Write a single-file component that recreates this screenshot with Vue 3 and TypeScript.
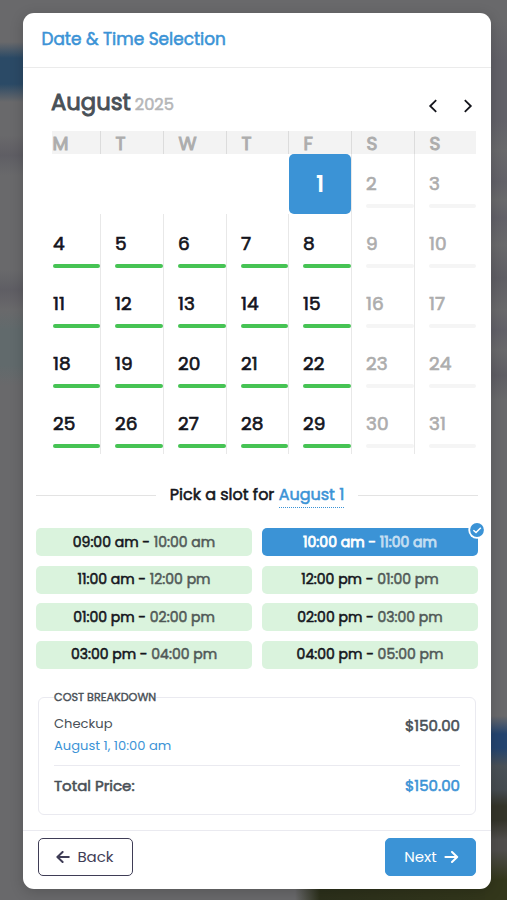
<script setup lang="ts">
interface Slot {
  from: string
  to: string
}

const weekdays: string[] = ['M', 'T', 'W', 'T', 'F', 'S', 'S']
const blanks = 4
const selectedDay = 1
const days = Array.from({ length: 31 }, (_, i) => {
  const day = i + 1
  const column = (i + blanks) % 7
  return { day, open: column < 5, selected: day === selectedDay, first: column === 0 }
})

const slots: Slot[] = [
  { from: '09:00 am', to: '10:00 am' },
  { from: '10:00 am', to: '11:00 am' },
  { from: '11:00 am', to: '12:00 pm' },
  { from: '12:00 pm', to: '01:00 pm' },
  { from: '01:00 pm', to: '02:00 pm' },
  { from: '02:00 pm', to: '03:00 pm' },
  { from: '03:00 pm', to: '04:00 pm' },
  { from: '04:00 pm', to: '05:00 pm' },
]
const selectedSlot = '10:00 am'
</script>

<template>
  <div class="page">
    <section class="modal">
      <header class="head heavy">Date &amp; Time Selection</header>

      <main class="body">
        <div class="month-bar">
          <h2 class="month">August</h2>
          <span class="year heavy">2025</span>
          <span class="nav">
            <svg width="10" height="14" viewBox="0 0 10 14"><path d="M8.2 1.2 2.2 7l6 5.8" /></svg>
            <svg width="10" height="14" viewBox="0 0 10 14"><path d="M1.8 1.2 7.8 7l-6 5.8" /></svg>
          </span>
        </div>

        <div class="week">
          <span v-for="(name, i) in weekdays" :key="i" class="weekday">{{ name }}</span>
        </div>
        <div class="days">
          <span v-for="n in blanks" :key="'b' + n" class="blank"></span>
          <div
            v-for="d in days"
            :key="d.day"
            class="day"
            :class="{ open: d.open, selected: d.selected, first: d.first }"
          >
            <span class="num">{{ d.day }}</span>
            <span v-if="!d.selected" class="bar"></span>
          </div>
        </div>

        <div class="pick heavy">
          <span class="pick-text">Pick a slot for <span class="pick-date">August 1</span></span>
        </div>

        <div class="slots">
          <div v-for="s in slots" :key="s.from" class="slot heavy" :class="{ active: s.from === selectedSlot }">
            <span class="time">{{ s.from }} - <span class="to">{{ s.to }}</span></span>
            <svg v-if="s.from === selectedSlot" class="badge" width="18" height="18" viewBox="0 0 18 18">
              <circle cx="9" cy="9" r="8.7" fill="#fff" />
              <circle cx="9" cy="9" r="6.9" fill="#3b93d6" />
              <path d="M5.4 9.2 8 11.5l4.8-4.8" fill="none" stroke="#fff" stroke-width="1.5" />
            </svg>
          </div>
        </div>

        <div class="cost">
          <span class="legend">COST BREAKDOWN</span>
          <div class="line">
            <div>
              <div class="item">Checkup</div>
              <div class="when">August 1, 10:00 am</div>
            </div>
            <span class="price heavy">$150.00</span>
          </div>
          <div class="total heavy">
            <span>Total Price:</span>
            <span class="price blue">$150.00</span>
          </div>
        </div>
      </main>

      <footer class="foot">
        <button class="btn back">
          <svg width="14" height="12" viewBox="0 0 14 12"><path d="M6.6 1 1.4 6l5.2 5M1.6 6h11.2" /></svg>
          <span>Back</span>
        </button>
        <button class="btn next">
          <span>Next</span>
          <svg width="15" height="12" viewBox="0 0 15 12"><path d="M8 1l5.2 5L8 11M13 6H1.4" /></svg>
        </button>
      </footer>
    </section>
  </div>
</template>

<style>
body {
  margin: 0;
  background: #69696b;
}
</style>

<style scoped>
.page {
  box-sizing: border-box;
  width: 507px;
  height: 900px;
  padding: 13px 16px 11px 23px;
  overflow: hidden;
  font-family: Poppins, Inter, "Open Sans", sans-serif;
  background:
    linear-gradient(180deg, transparent 42px, #2b4a66 58px, #2b4a66 84px, transparent 102px) 0 0 / 30px 900px no-repeat,
    linear-gradient(180deg, transparent 135px, #5f5e64 155px, transparent 175px, transparent 270px, #5f5e64 290px, transparent 310px, #616a6c 330px, #616a6c 365px, transparent 385px) 0 0 / 30px 900px no-repeat,
    linear-gradient(180deg, transparent 20px, #626168 60px, #626168 120px, #69696b 150px, #626168 182px, #69696b 200px, #626168 218px, #69696b 245px, #5f5e64 278px, #69696b 310px, #626168 330px, #69696b 350px, #5f5e64 375px, #69696b 400px, #69696b 716px, #24446f 734px, #24446f 748px, #4a5157 766px, #454b50 790px, #34342a 806px, #34342a 820px, #504e4c 840px, #504e4c 850px, #33371b 880px) 485px 0 / 22px 900px no-repeat,
    linear-gradient(90deg, transparent 295px, #2c301b 320px, #33371b 507px) 0 885px / 507px 15px no-repeat,
    #69696b;
}
.modal {
  box-sizing: border-box;
  display: flex;
  flex-direction: column;
  height: 876px;
  border-radius: 11px;
  background: #fff;
  box-shadow: 0 3px 14px rgba(0, 0, 0, 0.18);
}
/* Regular weight thickened by a thin stroke, keeping the regular widths */
.heavy {
  font-weight: 400;
  -webkit-text-stroke: 0.55px currentColor;
}
.head {
  box-sizing: border-box;
  height: 55px;
  padding: 0 18.5px;
  border-bottom: 1px solid #ebebeb;
  color: #3b93d6;
  font-size: 16.9px;
  line-height: 53px;
}
.body {
  height: 762px;
}
.month-bar {
  display: flex;
  align-items: baseline;
  height: 63px;
  padding: 0 18px 0 28px;
  line-height: 69px;
}
.month {
  margin: 0;
  color: #495057;
  font-size: 22.7px;
  font-weight: 400;
  -webkit-text-stroke: 0.9px currentColor;
}
.year {
  margin-left: 4px;
  color: #b5b6b8;
  font-size: 16.3px;
}
.nav {
  display: flex;
  gap: 25px;
  margin-left: auto;
  transform: translateY(3px);
}
.nav svg {
  fill: none;
  stroke: #14151c;
  stroke-width: 1.8;
}
.week,
.days {
  display: grid;
  grid-template-columns: 62px 63px 63px 62px 63px 63px 62px;
  width: 438px;
  margin-left: 15px;
}
.weekday {
  box-sizing: border-box;
  height: 23px;
  padding-left: 14.5px;
  border-left: 1px solid #dcdcdc;
  background: #f3f3f3;
  color: #adadad;
  font-size: 18.5px;
  font-weight: 400;
  -webkit-text-stroke: 1px currentColor;
  line-height: 25px;
}
.weekday:first-child {
  margin-left: 14px;
  padding-left: 0.5px;
  border-left: 0;
}
.day {
  box-sizing: border-box;
  display: flex;
  flex-direction: column;
  height: 60px;
  padding: 16px 0 0 14px;
  border-left: 1px solid #e8e8e8;
  color: #adadad;
  font-size: 18.5px;
  font-weight: 400;
  -webkit-text-stroke: 0.65px currentColor;
}
.day.first {
  border-left-color: transparent;
}
.num {
  height: 34px;
  line-height: 28px;
}
.bar {
  height: 4px;
  border-radius: 2px;
  background: #f5f5f5;
}
.open {
  color: #14151c;
}
.open .bar {
  background: #46c354;
}
.day.selected {
  align-items: center;
  justify-content: center;
  margin-left: 1px;
  padding: 0 0 1px;
  border: 0;
  border-radius: 5px;
  background: #3b93d6;
  color: #fff;
  font-size: 22.5px;
  font-weight: 600;
  -webkit-text-stroke: 0;
}
.selected .num {
  height: auto;
}
.pick {
  display: flex;
  align-items: center;
  gap: 14px;
  height: 26px;
  margin: 28px 13px 0;
  color: #14151c;
  font-size: 16px;
  line-height: 24px;
  white-space: nowrap;
}
.pick::before,
.pick::after {
  content: "";
  flex: 1;
  height: 1px;
  background: #e3e3e3;
}
.pick-date {
  padding-bottom: 1px;
  border-bottom: 1px dotted #3b93d6;
  color: #3b93d6;
}
.slots {
  display: grid;
  grid-template-columns: 216px 216px;
  gap: 9.6px 10px;
  margin: 20px 13px 0;
}
.slot {
  position: relative;
  height: 28px;
  border-radius: 5px;
  background: #daf3dd;
  color: #14151c;
  font-size: 14px;
  line-height: 28px;
  text-align: center;
}
.time {
  position: relative;
  top: -0.4px;
}
.to {
  opacity: 0.7;
}
.slot.active {
  background: #3b93d6;
  color: #fff;
  -webkit-text-stroke: 0.8px currentColor;
}
.badge {
  position: absolute;
  top: -7px;
  right: -7.5px;
}
.cost {
  position: relative;
  box-sizing: border-box;
  height: 118px;
  margin: 28px 15px 0;
  padding: 14px 15px;
  border: 1px solid #eaeaf0;
  border-radius: 6px;
  color: #495057;
}
.legend {
  position: absolute;
  top: -10px;
  left: 15px;
  background: #fff;
  font-size: 11.2px;
  font-weight: 400;
  -webkit-text-stroke: 0.4px currentColor;
  line-height: 18px;
}
.line {
  display: flex;
  justify-content: space-between;
  height: 53px;
  border-bottom: 1px solid #eaeaf0;
}
.item,
.when {
  position: relative;
  top: 1px;
  font-size: 13.1px;
  line-height: 22px;
}
.when,
.blue {
  color: #3b93d6;
}
.price {
  font-size: 15px;
  line-height: 27px;
}
.total {
  display: flex;
  justify-content: space-between;
  padding-top: 6px;
  font-size: 15px;
  line-height: 27px;
}
.foot {
  box-sizing: border-box;
  display: flex;
  justify-content: space-between;
  height: 59px;
  padding: 7px 15px 13px;
  border-top: 1px solid #eaeaf0;
}
.btn {
  box-sizing: border-box;
  display: flex;
  align-items: center;
  justify-content: center;
  gap: 7px;
  height: 38px;
  margin: 0;
  padding: 0 0 1px;
  border: 1px solid #3f3d56;
  border-radius: 5px;
  background: #fff;
  color: #3f3d56;
  font: inherit;
  font-size: 15px;
}
.btn svg {
  fill: none;
  stroke: currentColor;
  stroke-width: 2;
  stroke-linecap: round;
  stroke-linejoin: round;
}
.back {
  width: 95px;
  padding-right: 1px;
}
.next {
  width: 91px;
  padding-left: 2px;
  border-color: #3b93d6;
  background: #3b93d6;
  color: #fff;
}
</style>
